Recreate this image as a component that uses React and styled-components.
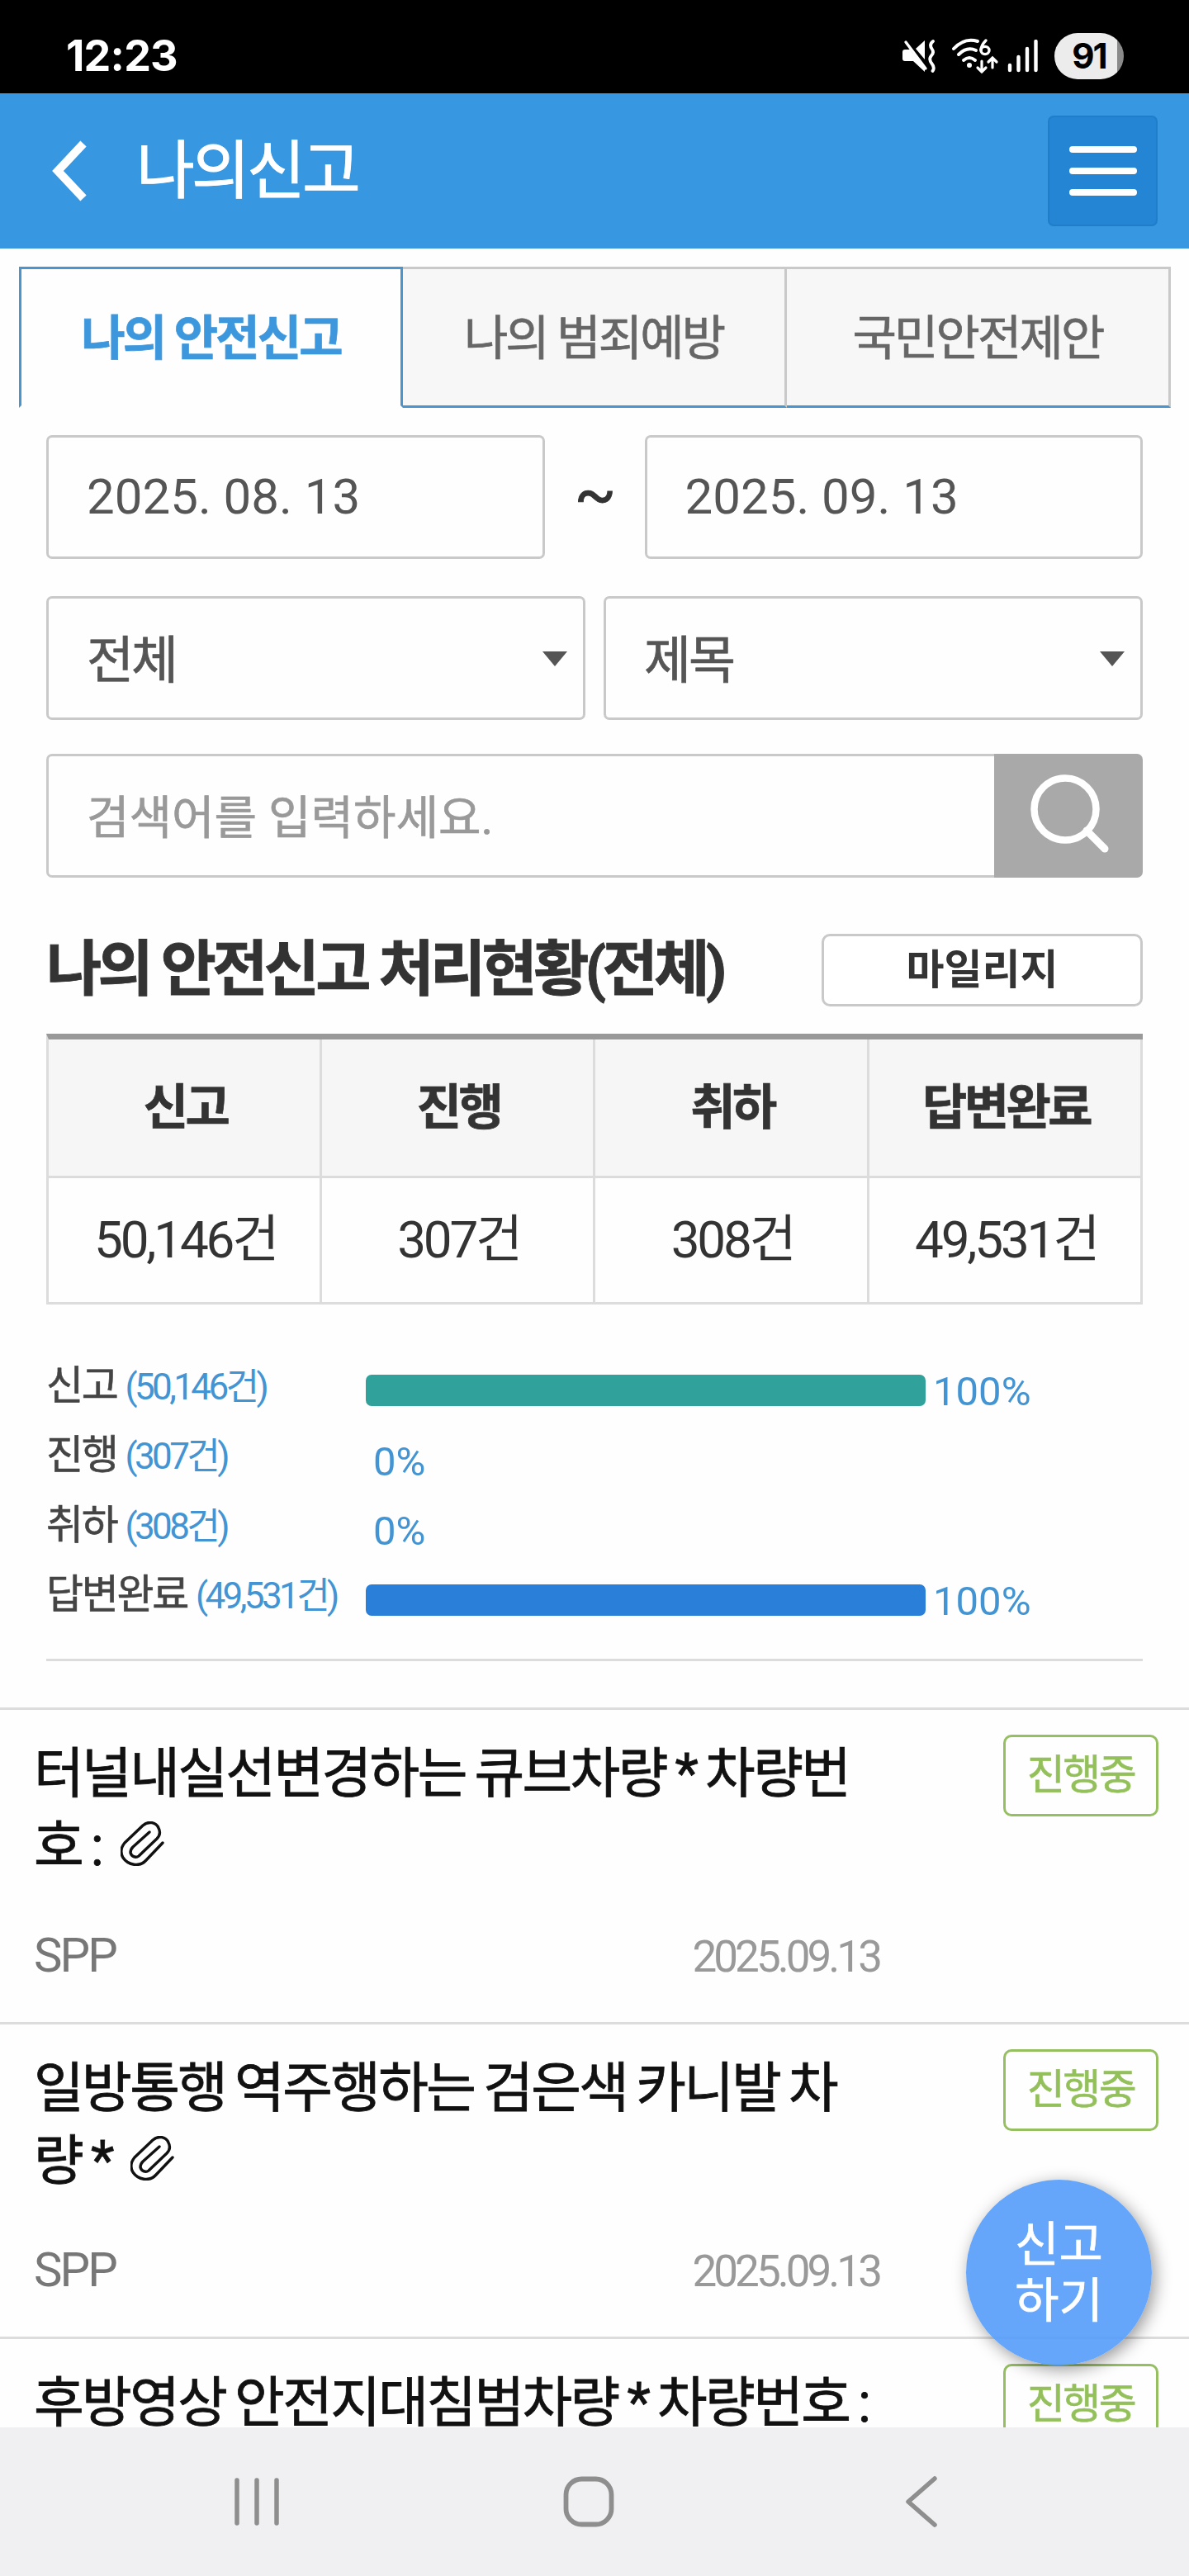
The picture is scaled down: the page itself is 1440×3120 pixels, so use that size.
import React from 'react'

//Styling
import styled, {createGlobalStyle, css} from 'styled-components';

const tabs = ['나의 안전신고', '나의 범죄예방', '국민안전제안'];

const status = [
    {name: '신고', count: '50,146건', percent: 100, color: '#30a29b'},
    {name: '진행', count: '307건', percent: 0, color: '#30a29b'},
    {name: '취하', count: '308건', percent: 0, color: '#30a29b'},
    {name: '답변완료', count: '49,531건', percent: 100, color: '#2a7fd9'},
];

//thin space keeps the star off the last syllable
const reports = [
    {id: 1, title: '터널내실선변경하는 큐브차량\u2009* 차량번호 :', date: '2025.09.13', state: '진행중'},
    {id: 2, title: '일방통행 역주행하는 검은색 카니발 차량\u2009*', date: '2025.09.13', state: '진행중'},
    {id: 3, title: '후방영상 안전지대침범차량\u2009* 차량번호 :', state: '진행중'},
];

function MuteIcon() {
    return (
        <svg width="40" height="40" viewBox="0 0 40 40">
            <path d="M0 15q0-3 3-3h6l18 22v5L13 26H3q-3 0-3-3z" fill="#fff" />
            <path d="M27 1v23L16 11z" fill="#fff" />
            <path d="M4 3l24 32" stroke="#fff" strokeWidth="3.4" strokeLinecap="round" />
            <path d="M37 2q-5 4-1.500 9t-1 9q-3 4 1 9t1 9" fill="none" stroke="#fff" strokeWidth="3.8" strokeLinecap="round" />
        </svg>
    )
}

function WifiIcon() {
    return (
        <svg width="58" height="44" viewBox="0 0 58 44">
            <g fill="none" stroke="#fff" strokeWidth="4" strokeLinecap="round">
                <path d="M3 13Q16-1 32 4" />
                <path d="M9 20Q19 10 30 15" />
                <path d="M15 27Q22 21 29 27" />
                <path d="M42 3Q36 9 36 15" strokeWidth="3.4" />
                <ellipse cx="41" cy="15" rx="5" ry="4.6" strokeWidth="3.4" />
                <path d="M37 28v13M32 36l5 5 5-5M50 36V24M45 29l5-5 5 5" strokeWidth="3.2" />
            </g>
            <circle cx="22" cy="33" r="3" fill="#fff" />
        </svg>
    )
}

function SignalIcon() {
    return (
        <svg width="38" height="40" viewBox="0 0 38 40">
            <path d="M3 31v6M13.500 21v16M24 11v26M34.500 2v35" stroke="#fff" strokeWidth="4.400" strokeLinecap="round" />
        </svg>
    )
}

function ClipIcon() {
    return (
        <svg width="54" height="54" viewBox="0 0 54 54">
            <path
                d="M51 26L31 47C23 56 9 53 3 44C-1 37 1 31 5 26L27 5C34-1 43 1 46 8C49 14 47 18 44 21L22 42C18 45 13 42 12 38C12 35 13 33 15 31L35 13"
                fill="none"
                stroke="#111"
                strokeWidth="3.4"
                strokeLinecap="round"
                strokeLinejoin="round"
            />
        </svg>
    )
}

function App() {
    return (
        <>
        <GlobalStyle />
        <Screen>
            <StatusBar>
                <Clock>12:23</Clock>
                <StatusIcons>
                    <MuteIcon />
                    <WifiIcon />
                    <SignalIcon />
                    <Battery>91</Battery>
                </StatusIcons>
            </StatusBar>

            <Header>
                <svg width="44" height="74" viewBox="0 0 44 74">
                    <path d="M39 4L8 37L39 70" fill="none" stroke="#fff" strokeWidth="10" />
                </svg>
                <h1>나의신고</h1>
                <MenuButton>
                    <span />
                    <span />
                    <span />
                </MenuButton>
            </Header>

            <Tabs>
                {tabs.map((tab, i) => (
                    <Tab key={tab} $active={i === 0}>{tab}</Tab>
                ))}
            </Tabs>

            <Search>
                <Row>
                    <Field>2025. 08. 13</Field>
                    <Tilde>~</Tilde>
                    <Field>2025. 09. 13</Field>
                </Row>
                <Row $gap="22px">
                    <Select>전체</Select>
                    <Select>제목</Select>
                </Row>
                <Row>
                    <Keyword>검색어를 입력하세요.</Keyword>
                    <SearchButton>
                        <svg width="100" height="100" viewBox="0 0 100 100">
                            <circle cx="46" cy="42" r="37.500" fill="none" stroke="#fff" strokeWidth="8.500" />
                            <path d="M72 68L94 90" stroke="#fff" strokeWidth="9" strokeLinecap="round" />
                        </svg>
                    </SearchButton>
                </Row>
            </Search>

            <Summary>
                <SummaryHead>
                    <h2>나의 안전신고 처리현황(전체)</h2>
                    <Mileage>마일리지</Mileage>
                </SummaryHead>
                <Table>
                    {status.map((item) => (
                        <div key={item.name}>
                            <Th>{item.name}</Th>
                            <Td>{item.count}</Td>
                        </div>
                    ))}
                </Table>
                <Graph>
                    {status.map((item) => (
                        <GraphRow key={item.name}>
                            <GraphLabel>{item.name} <span>({item.count})</span></GraphLabel>
                            <Bar style={{width: item.percent * 6.78}} $color={item.color} />
                            <Percent>{item.percent}%</Percent>
                        </GraphRow>
                    ))}
                </Graph>
            </Summary>

            <List>
                {reports.map((report) => (
                    <Report key={report.id}>
                        <div>
                            <Title>{report.title} <ClipIcon /></Title>
                            {report.date && (
                            <Meta>
                                <span>SPP</span>
                                <time>{report.date}</time>
                            </Meta>
                            )}
                        </div>
                        <Badge>{report.state}</Badge>
                    </Report>
                ))}
            </List>

            <ReportButton>신고<br />하기</ReportButton>

            <NavBar>
                <svg width="60" height="64" viewBox="0 0 60 64">
                    <path d="M6 6v52M30 6v52M54 6v52" stroke="#8e8e8f" strokeWidth="5.500" strokeLinecap="round" />
                </svg>
                <svg width="64" height="64" viewBox="0 0 64 64">
                    <rect x="4.500" y="4.500" width="55" height="55" rx="19" fill="none" stroke="#8e8e8f" strokeWidth="5.800" />
                </svg>
                <svg width="44" height="64" viewBox="0 0 44 64">
                    <path d="M38 4L6 32L38 60" fill="none" stroke="#8e8e8f" strokeWidth="5.500" strokeLinecap="round" strokeLinejoin="round" />
                </svg>
            </NavBar>
        </Screen>
        </>
    )
};

const GlobalStyle = createGlobalStyle`
    * {
        margin: 0;
        padding: 0;
        box-sizing: border-box;
    }

    body {
        background: white;
        font-family: Roboto, "Noto Sans CJK KR", sans-serif;
        line-height: 1;
        color: #333;
    }

    svg {
        display: block;
        flex-shrink: 0;
    }
`

//hangul looks a bit thin next to Roboto
const firm = css`
    -webkit-text-stroke: .012em currentColor;
`

const Screen = styled.div`
    position: relative;
    width: 1440px;
    height: 3120px;
    overflow: hidden;
    display: flex;
    flex-direction: column;
    background: #fefefe;
`

const StatusBar = styled.div`
    height: 113px;
    flex-shrink: 0;
    padding: 22px 79px 0 80px;
    background: black;
    display: flex;
    align-items: center;
    justify-content: space-between;
`

const Clock = styled.p`
    font-family: Inter, sans-serif;
    font-size: 52px;
    font-weight: 700;
    letter-spacing: -.8px;
    color: white;
`

const StatusIcons = styled.div`
    display: flex;
    align-items: center;

    svg:nth-child(1) {
        margin-right: 19px;
    }

    svg:nth-child(2) {
        margin-right: 10px;
    }

    svg:nth-child(3) {
        margin-right: 19px;
    }
`

const Battery = styled.div`
    width: 84px;
    height: 56px;
    border-radius: 28px;
    background: linear-gradient(to right, #ececec 76px, #8a8a8a 76px);
    color: black;
    font-family: Inter, sans-serif;
    font-size: 42px;
    font-weight: 700;
    letter-spacing: -2px;
    line-height: 56px;
    text-align: center;
`

const Header = styled.header`
    height: 188px;
    flex-shrink: 0;
    padding: 0 38px 0 62px;
    background: #3797e1;
    display: flex;
    align-items: center;

    h1 {
        flex: 1;
        margin: 2px 0 0 59px;
        font-size: 77px;
        font-weight: 400;
        letter-spacing: -.05em;
        color: white;
        ${firm}
    }
`

const MenuButton = styled.button`
    width: 133px;
    height: 134px;
    border: 2px solid #1f7dca;
    border-radius: 7px;
    background: #2385d4;
    display: flex;
    flex-direction: column;
    align-items: center;
    justify-content: center;
    gap: 18px;

    span {
        width: 82px;
        height: 8px;
        border-radius: 4px;
        background: white;
    }
`

const Tabs = styled.nav`
    margin: 22px 22px 0 23px;
    height: 171px;
    flex-shrink: 0;
    display: grid;
    grid-template-columns: 465px 465px 465px;
`

const Tab = styled.div`
    padding-top: 3px;
    border: 3px solid ${({$active}) => $active ? '#4a95cc' : '#c9c9c9'};
    border-bottom: 3px solid ${({$active}) => $active ? 'transparent' : '#4a95cc'};
    border-left-width: ${({$active}) => $active ? '3px' : '0'};
    background: ${({$active}) => $active ? '#fefefe' : '#f7f7f7'};
    color: ${({$active}) => $active ? '#3d97dd' : '#666'};
    font-size: 58px;
    font-weight: ${({$active}) => $active ? 700 : 400};
    letter-spacing: -.05em;
    display: flex;
    align-items: center;
    justify-content: center;
    ${firm}
`

const Search = styled.section`
    padding: 33px 56px 0;
    flex-shrink: 0;
`

const Row = styled.div`
    display: flex;
    gap: ${({$gap}) => $gap || '0'};
    margin-bottom: 45px;

    &:nth-child(2) {
        margin-bottom: 41px;
    }

    &:last-child {
        margin-bottom: 0;
    }
`

const Field = styled.div`
    flex: 1;
    height: 150px;
    padding-left: 46px;
    border: 3px solid #c9c9c9;
    border-radius: 7px;
    font-size: 60px;
    color: #555;
    display: flex;
    align-items: center;
`

const Tilde = styled.span`
    width: 121px;
    padding-left: 2px;
    font-size: 74px;
    font-weight: 400;
    line-height: 144px;
    text-align: center;
    ${firm}
`

const Select = styled(Field)`
    justify-content: space-between;
    padding: 8px 19px 0 46px;
    font-size: 62px;
    letter-spacing: -.05em;
    ${firm}

    &::after {
        content: '';
        margin-top: -6px;
        border: 15px solid transparent;
        border-top: 18px solid #555;
        border-bottom: 0;
    }
`

const Keyword = styled(Field)`
    padding-top: 6px;
    border-right: none;
    border-radius: 7px 0 0 7px;
    font-size: 56px;
    color: #999;
    ${firm}
`

const SearchButton = styled.button`
    width: 180px;
    height: 150px;
    border: none;
    border-radius: 0 7px 7px 0;
    background: #a9a9a9;
    display: flex;
    align-items: center;
    justify-content: center;
`

const Summary = styled.section`
    margin: 68px 56px 0;
    height: 881px;
    flex-shrink: 0;
    border-bottom: 3px solid #dcdcdc;
`

const SummaryHead = styled.div`
    height: 121px;
    display: flex;
    align-items: flex-start;
    justify-content: space-between;

    h2 {
        font-size: 73px;
        font-weight: 700;
        letter-spacing: -.063em;
        line-height: 86px;
        white-space: nowrap;
        ${firm}
    }
`

const Mileage = styled.button`
    width: 389px;
    height: 88px;
    border: 3px solid #c9c9c9;
    border-radius: 10px;
    background: white;
    font-family: inherit;
    font-size: 50px;
    font-weight: 700;
    line-height: 82px;
    color: #333;
`

const Table = styled.div`
    display: grid;
    grid-template-columns: 331px 331px 332px 331px;
    border-top: 7px solid #999;
    border-left: 3px solid #dcdcdc;
    text-align: center;
`

const Th = styled.div`
    height: 168px;
    padding-left: 3px;
    border-right: 3px solid #dcdcdc;
    border-bottom: 3px solid #dcdcdc;
    background: #f6f6f6;
    font-size: 59px;
    font-weight: 700;
    letter-spacing: -.06em;
    line-height: 166px;
    ${firm}
`

const Td = styled.div`
    height: 153px;
    padding-left: 3px;
    border-right: 3px solid #dcdcdc;
    border-bottom: 3px solid #dcdcdc;
    font-size: 62px;
    line-height: 150px;
    letter-spacing: -.052em;
`

const Graph = styled.div`
    padding-top: 57px;
`

const GraphRow = styled.div`
    height: 84.5px;
    display: flex;
    align-items: center;
`

const GraphLabel = styled.p`
    width: 387px;
    font-size: 49px;
    letter-spacing: -2.3px;
    line-height: 86px;
    color: #444;
    white-space: nowrap;
    ${firm}

    span {
        font-size: 44px;
        letter-spacing: -3.6px;
        color: #4394d3;
        -webkit-text-stroke: 0;
    }
`

const Bar = styled.div`
    height: 38px;
    margin-top: 10px;
    border-radius: 7px;
    background: ${({$color}) => $color};
`

const Percent = styled.span`
    margin: 13px 0 0 9px;
    font-size: 49px;
    color: #4394d3;
`

const List = styled.section`
    margin-top: 56px;
    flex: 1;
    min-height: 0;
    overflow: hidden;
`

const Report = styled.article`
    height: 381px;
    padding: 30px 37px 0 41px;
    border-top: 3px solid #dcdcdc;
    display: flex;
    justify-content: space-between;
    align-items: flex-start;
`

const Title = styled.h3`
    width: 1024px;
    padding-top: 4px;
    font-size: 66px;
    font-weight: 400;
    letter-spacing: -.04em;
    word-spacing: -3px;
    line-height: 88px;
    word-break: break-all;
    color: #111;
    ${firm}

    svg {
        display: inline-block;
        vertical-align: -1px;
        margin-left: 12px;
    }
`

const Meta = styled.div`
    width: 1024px;
    margin-top: 58px;
    display: flex;
    justify-content: space-between;
    align-items: baseline;

    span {
        font-size: 58px;
        letter-spacing: -.05em;
        color: #777;
    }

    time {
        font-size: 53px;
        letter-spacing: -.075em;
        color: #999;
    }
`

const Badge = styled.span`
    width: 188px;
    height: 99px;
    border: 3px solid #96bf62;
    border-radius: 10px;
    font-size: 50px;
    letter-spacing: -.05em;
    line-height: 92px;
    text-align: center;
    color: #93c05a;
    ${firm}
`

const ReportButton = styled.button`
    position: absolute;
    right: 45px;
    bottom: 255px;
    width: 225px;
    height: 225px;
    border: none;
    border-radius: 50%;
    background: rgba(84, 156, 250, .9);
    box-shadow: 4px 5px 20px rgba(0, 0, 0, .4);
    font-family: inherit;
    font-size: 58px;
    line-height: 68px;
    color: white;
    ${firm}
`

const NavBar = styled.footer`
    height: 180px;
    flex-shrink: 0;
    padding-left: 281px;
    background: #f0f0f2;
    display: flex;
    align-items: center;

    svg:nth-child(2) {
        margin: 0 349px 0 340px;
    }
`

export default App;
